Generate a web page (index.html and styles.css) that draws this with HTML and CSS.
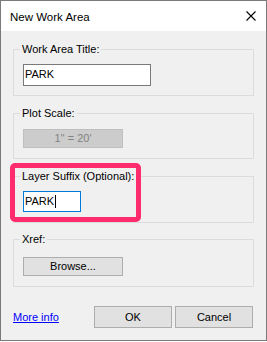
FILE: index.html
```html
<html>
  <head>
    <link rel="stylesheet" href="styles.css">
  </head>
  <body>
    <div class="window">
      <div class="titlebar">
        <span class="title">New Work Area</span>
        <svg class="close" width="10" height="10" viewBox="0 0 10 10">
          <path d="M0.5 0.5 L9.5 9.5 M9.5 0.5 L0.5 9.5" stroke="#000" stroke-width="1.1" fill="none"/>
        </svg>
      </div>

      <div class="dialog_body">
        <fieldset class="group group_title">
          <legend>Work Area Title:</legend>
          <div class="textbox wide">PARK</div>
        </fieldset>

        <fieldset class="group group_scale">
          <legend>Plot Scale:</legend>
          <div class="button disabled">1'' = 20'</div>
        </fieldset>

        <fieldset class="group group_suffix">
          <legend>Layer Suffix (Optional):</legend>
          <div class="textbox short focused">PARK<span class="caret"></span></div>
        </fieldset>

        <fieldset class="group group_xref">
          <legend>Xref:</legend>
          <div class="button">Browse...</div>
        </fieldset>

        <div class="footer">
          <a href="#" class="more_info">More info</a>
          <div class="footer_buttons">
            <div class="button footer_btn">OK</div>
            <div class="button footer_btn">Cancel</div>
          </div>
        </div>
      </div><!-- dialog_body -->

      <div class="highlight"></div>
    </div><!-- window -->
  </body>
</html>
```

FILE: styles.css
```css
body { margin: 0; font-family: "Liberation Sans", Arial, sans-serif; font-size: 11px; color: #000; }

.window { position: relative; box-sizing: border-box; width: 267px; height: 341px; border: 1px solid #7a7a7a; background: #f0f0f0; }

.titlebar { display: flex; align-items: center; justify-content: space-between; height: 30px; padding: 0 10px 0 9px; background: #fff; }
.title { font-size: 11.5px; padding-top: 1px; }
.close { display: block; }

.dialog_body { padding: 11px 12px 0 12px; }

.group { margin: 0; border: 1px solid #dcdcdc; padding: 7px 9px 9px 9px; }
.group legend { margin-left: -3px; padding: 0 2px; line-height: 15px; }

.group_scale { margin-top: 10px; padding-top: 8px; padding-bottom: 10px; }
.group_suffix { margin-top: 10px; padding-bottom: 10px; }
.group_xref { margin-top: 9px; padding-top: 10px; padding-bottom: 10px; }

.textbox { box-sizing: border-box; height: 22px; line-height: 19px; padding-left: 1px; background: #fff; border: 1px solid #7a7a7a; }
.textbox.wide { width: 128px; }
.textbox.short { width: 58px; height: 21px; line-height: 18px; }
.textbox.focused { border-color: #0078d7; }
.caret { display: inline-block; width: 1px; height: 13px; margin-left: 1px; vertical-align: -3px; background: #000; }

.button { box-sizing: border-box; width: 100px; height: 19px; line-height: 17px; text-align: center; background: #e1e1e1; border: 1px solid #adadad; }
.button.disabled { background: #cccccc; border-color: #bfbfbf; color: #838383; }

.footer { display: flex; align-items: center; margin-top: 19px; }
.more_info { color: #0000ff; text-decoration: underline; }
.footer_buttons { display: flex; gap: 3px; margin-left: auto; margin-right: 1px; }
.footer_btn { width: 78px; height: 22px; line-height: 20px; }

.highlight { position: absolute; left: 9px; top: 162px; box-sizing: border-box; width: 131px; height: 59px; border: 5px solid #fe2c6c; border-radius: 5px; }
```
